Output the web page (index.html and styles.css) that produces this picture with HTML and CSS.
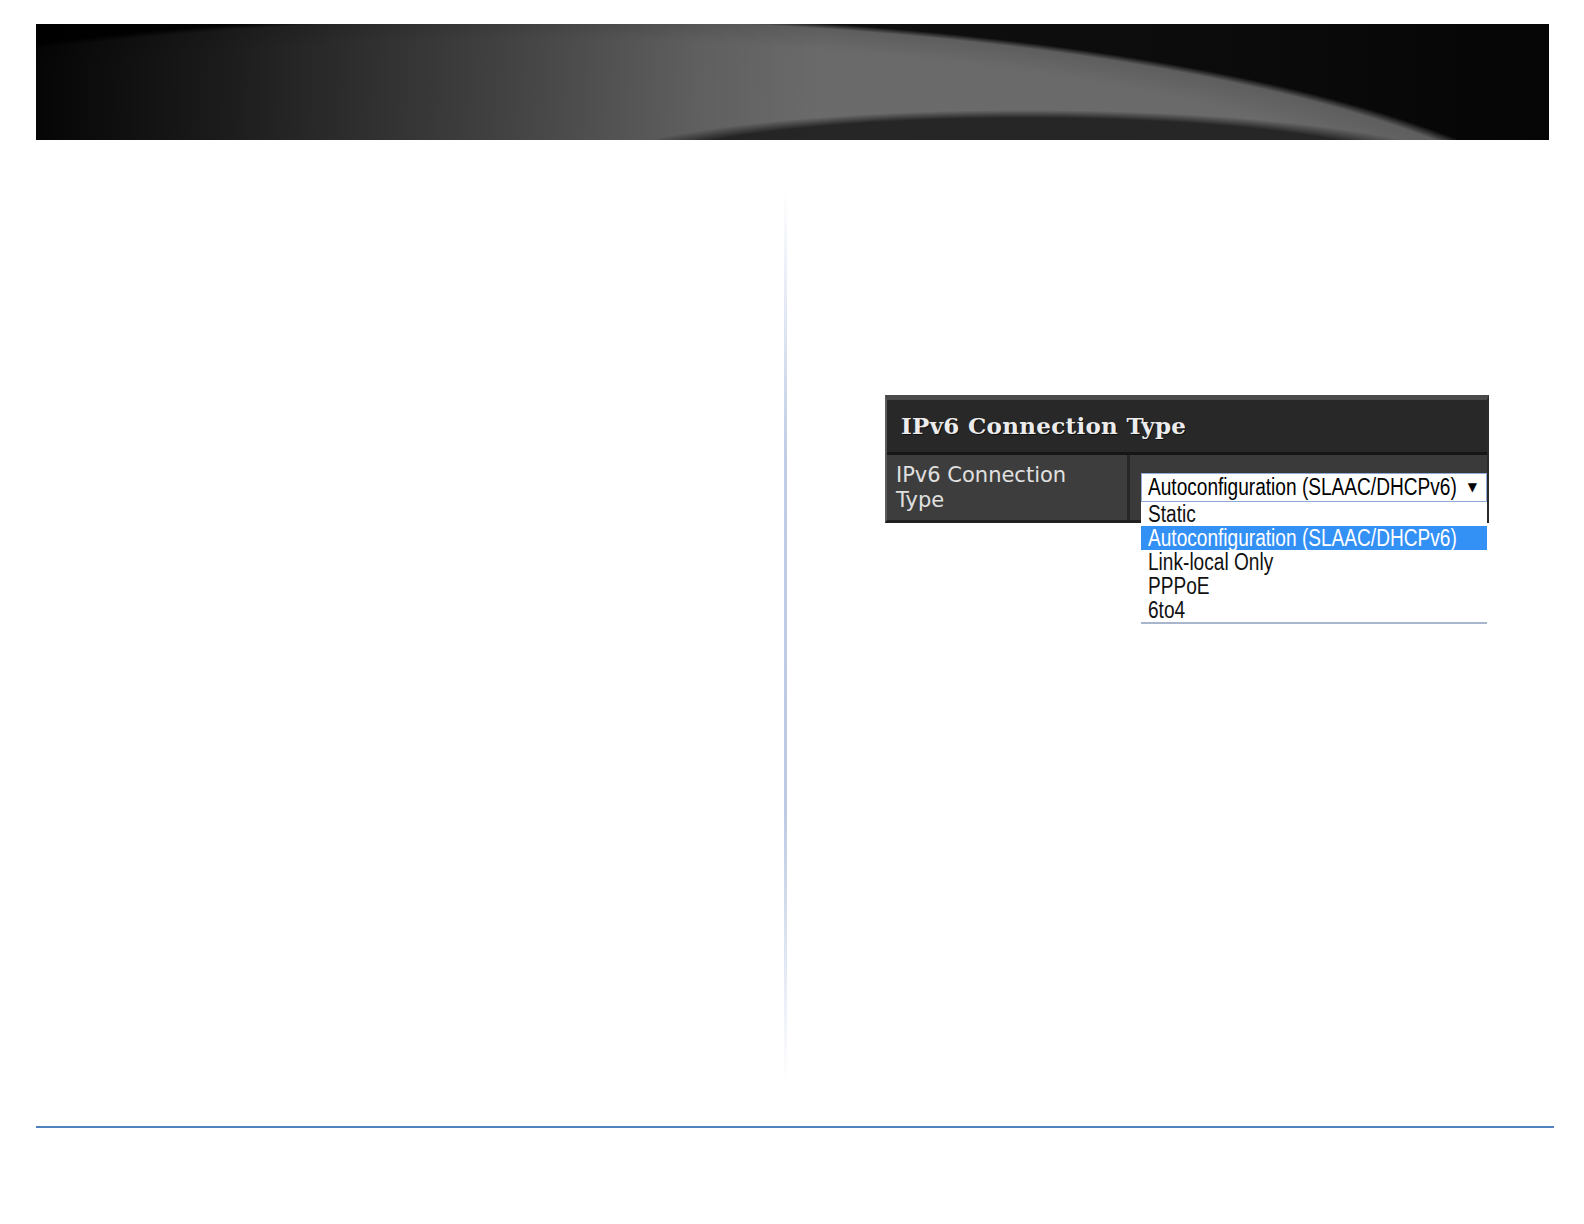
FILE: index.html
```html
<html><head>
    <link rel="stylesheet" href="styles.css">
</head><body>
    <div class="banner"></div>
    <div class="spread">
        <div class="page-left"></div>
        <div class="gutter"></div>
        <div class="page-right">
            <div class="panel">
                <div class="panel-title">IPv6 Connection Type</div>
                <div class="panel-row">
                    <div class="label">IPv6 Connection Type</div>
                    <div class="value">
                        <div class="select-wrap">
                            <div class="select">
                                <span class="txt">Autoconfiguration (SLAAC/DHCPv6)</span>
                                <span class="arrow">&#9660;</span>
                            </div>
                            <ul class="options">
                                <li><span class="txt">Static</span></li>
                                <li class="selected"><span class="txt">Autoconfiguration (SLAAC/DHCPv6)</span></li>
                                <li><span class="txt">Link-local Only</span></li>
                                <li><span class="txt">PPPoE</span></li>
                                <li><span class="txt">6to4</span></li>
                            </ul>
                        </div>
                    </div>
                </div>
            </div>
        </div>
    </div>
    <div class="rule"></div>
</body></html>
```

FILE: styles.css
```css
body {
    margin: 0;
    background: #fff;
    font-family: 'Liberation Sans', Arial, sans-serif;
}

.banner {
    margin: 24px 0 0 36px;
    width: 1513px;
    height: 116px;
    background:
        linear-gradient(to right, rgba(0,0,0,0.95) 0%, rgba(0,0,0,0.75) 12%, rgba(0,0,0,0.4) 30%, rgba(0,0,0,0.1) 44%, rgba(0,0,0,0) 52%),
        radial-gradient(450px 66px at 990px 152px, #242424 0%, #262626 88%, rgba(38,38,38,0) 100%),
        radial-gradient(1078px 260px at 500px 250px, #6c6c6c 0%, #6a6a6a 90%, #5e5e5e 98%, rgba(60,60,60,0) 100%),
        linear-gradient(to right, #050505, #121212 40%, #0b0b0b 80%, #050505);
}

.spread {
    display: flex;
    height: 986px;
}

.page-left {
    width: 784px;
}

.gutter {
    width: 3px;
    margin-top: 50px;
    height: 890px;
    background: linear-gradient(to bottom, rgba(195,207,228,0) 0%, #c0cde6 30%, #bccae3 70%, rgba(195,207,228,0) 100%);
}

.page-right {
    flex: 1;
}

.panel {
    width: 600px;
    margin: 255px 0 0 98px;
    border-left: 2px solid #5c5c5c;
    border-right: 2px solid #2a2a2a;
    border-top: 5px solid #4a4a4a;
    border-bottom: 3px solid #202020;
    background: #3d3d3d;
}

.panel-title {
    height: 52px;
    line-height: 52px;
    padding-left: 14px;
    background: #282828;
    border-bottom: 3px solid #161616;
    color: #ececec;
    font-family: 'DejaVu Serif', serif;
    font-weight: bold;
    font-size: 23px;
    letter-spacing: 0.3px;
    text-shadow: 1px 1px 0 #111;
}

.panel-row {
    display: flex;
    height: 65px;
}

.label {
    width: 213px;
    padding: 8px 19px 0 9px;
    border-right: 3px solid #262626;
    color: #e0e0e0;
    font-family: 'DejaVu Sans', sans-serif;
    font-size: 21px;
    line-height: 25px;
}

.value {
    flex: 1;
    padding: 18px 0 0 11px;
    background: #3a3a3a;
}

.select-wrap {
    position: relative;
    width: 346px;
}

.txt {
    display: inline-block;
    white-space: nowrap;
    transform: scaleX(0.83);
    transform-origin: left center;
}

.select {
    display: flex;
    justify-content: space-between;
    height: 27px;
    padding: 0 9px 0 6px;
    border: 1px solid #8fa9d6;
    background: #fff;
    color: #000;
    font-size: 23px;
    line-height: 27px;
    overflow: hidden;
}

.select .txt {
    width: 300px;
}

.arrow {
    font-size: 12px;
    font-family: 'DejaVu Sans', sans-serif;
}

.options {
    position: absolute;
    top: 29px;
    left: 0;
    width: 346px;
    margin: 0;
    padding: 0;
    list-style: none;
    background: #fff;
    border-bottom: 2px solid #a7b6cc;
    font-size: 23px;
    overflow: hidden;
}

.options li {
    height: 24px;
    line-height: 24px;
    padding-left: 7px;
    color: #111;
    white-space: nowrap;
}

.options li.selected {
    background: #3390f5;
    color: #fff;
}

.rule {
    margin-left: 36px;
    width: 1518px;
    height: 2px;
    background: #4f81bd;
}
```
